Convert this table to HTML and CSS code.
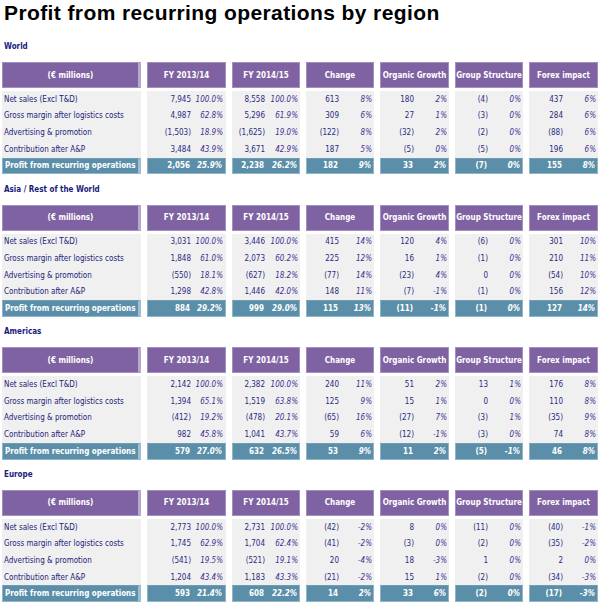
FILE: index.html
```html
<!DOCTYPE html>
<html lang="en">
<head>
<meta charset="utf-8">
<title>Profit from recurring operations by region</title>
<link rel="stylesheet" href="styles.css">
</head>
<body>
<h1 class="title">Profit from recurring operations by region</h1>

<section class="section">
  <div class="region">World</div>
  <div class="tbl">
    <div class="hd first">(€ millions)</div><div class="hd">FY 2013/14</div><div class="hd">FY 2014/15</div><div class="hd">Change</div><div class="hd">Organic Growth</div><div class="hd">Group Structure</div><div class="hd">Forex impact</div>
    <div class="lbl">Net sales (Excl T&amp;D)</div><div class="v"><span class="n">7,945</span><span class="p">100.0%</span></div><div class="v"><span class="n">8,558</span><span class="p">100.0%</span></div><div class="v"><span class="n">613</span><span class="p">8%</span></div><div class="v"><span class="n">180</span><span class="p">2%</span></div><div class="v"><span class="n">(4)</span><span class="p">0%</span></div><div class="v"><span class="n">437</span><span class="p">6%</span></div>
    <div class="lbl">Gross margin after logistics costs</div><div class="v"><span class="n">4,987</span><span class="p">62.8%</span></div><div class="v"><span class="n">5,296</span><span class="p">61.9%</span></div><div class="v"><span class="n">309</span><span class="p">6%</span></div><div class="v"><span class="n">27</span><span class="p">1%</span></div><div class="v"><span class="n">(3)</span><span class="p">0%</span></div><div class="v"><span class="n">284</span><span class="p">6%</span></div>
    <div class="lbl">Advertising &amp; promotion</div><div class="v"><span class="n">(1,503)</span><span class="p">18.9%</span></div><div class="v"><span class="n">(1,625)</span><span class="p">19.0%</span></div><div class="v"><span class="n">(122)</span><span class="p">8%</span></div><div class="v"><span class="n">(32)</span><span class="p">2%</span></div><div class="v"><span class="n">(2)</span><span class="p">0%</span></div><div class="v"><span class="n">(88)</span><span class="p">6%</span></div>
    <div class="lbl">Contribution after A&amp;P</div><div class="v"><span class="n">3,484</span><span class="p">43.9%</span></div><div class="v"><span class="n">3,671</span><span class="p">42.9%</span></div><div class="v"><span class="n">187</span><span class="p">5%</span></div><div class="v"><span class="n">(5)</span><span class="p">0%</span></div><div class="v"><span class="n">(5)</span><span class="p">0%</span></div><div class="v"><span class="n">196</span><span class="p">6%</span></div>
    <div class="lbl tot first">Profit from recurring operations</div><div class="v tot"><span class="n">2,056</span><span class="p">25.9%</span></div><div class="v tot"><span class="n">2,238</span><span class="p">26.2%</span></div><div class="v tot"><span class="n">182</span><span class="p">9%</span></div><div class="v tot"><span class="n">33</span><span class="p">2%</span></div><div class="v tot"><span class="n">(7)</span><span class="p">0%</span></div><div class="v tot"><span class="n">155</span><span class="p">8%</span></div>
  </div>
</section>

<section class="section">
  <div class="region">Asia / Rest of the World</div>
  <div class="tbl">
    <div class="hd first">(€ millions)</div><div class="hd">FY 2013/14</div><div class="hd">FY 2014/15</div><div class="hd">Change</div><div class="hd">Organic Growth</div><div class="hd">Group Structure</div><div class="hd">Forex impact</div>
    <div class="lbl">Net sales (Excl T&amp;D)</div><div class="v"><span class="n">3,031</span><span class="p">100.0%</span></div><div class="v"><span class="n">3,446</span><span class="p">100.0%</span></div><div class="v"><span class="n">415</span><span class="p">14%</span></div><div class="v"><span class="n">120</span><span class="p">4%</span></div><div class="v"><span class="n">(6)</span><span class="p">0%</span></div><div class="v"><span class="n">301</span><span class="p">10%</span></div>
    <div class="lbl">Gross margin after logistics costs</div><div class="v"><span class="n">1,848</span><span class="p">61.0%</span></div><div class="v"><span class="n">2,073</span><span class="p">60.2%</span></div><div class="v"><span class="n">225</span><span class="p">12%</span></div><div class="v"><span class="n">16</span><span class="p">1%</span></div><div class="v"><span class="n">(1)</span><span class="p">0%</span></div><div class="v"><span class="n">210</span><span class="p">11%</span></div>
    <div class="lbl">Advertising &amp; promotion</div><div class="v"><span class="n">(550)</span><span class="p">18.1%</span></div><div class="v"><span class="n">(627)</span><span class="p">18.2%</span></div><div class="v"><span class="n">(77)</span><span class="p">14%</span></div><div class="v"><span class="n">(23)</span><span class="p">4%</span></div><div class="v"><span class="n">0</span><span class="p">0%</span></div><div class="v"><span class="n">(54)</span><span class="p">10%</span></div>
    <div class="lbl">Contribution after A&amp;P</div><div class="v"><span class="n">1,298</span><span class="p">42.8%</span></div><div class="v"><span class="n">1,446</span><span class="p">42.0%</span></div><div class="v"><span class="n">148</span><span class="p">11%</span></div><div class="v"><span class="n">(7)</span><span class="p">-1%</span></div><div class="v"><span class="n">(1)</span><span class="p">0%</span></div><div class="v"><span class="n">156</span><span class="p">12%</span></div>
    <div class="lbl tot first">Profit from recurring operations</div><div class="v tot"><span class="n">884</span><span class="p">29.2%</span></div><div class="v tot"><span class="n">999</span><span class="p">29.0%</span></div><div class="v tot"><span class="n">115</span><span class="p">13%</span></div><div class="v tot"><span class="n">(11)</span><span class="p">-1%</span></div><div class="v tot"><span class="n">(1)</span><span class="p">0%</span></div><div class="v tot"><span class="n">127</span><span class="p">14%</span></div>
  </div>
</section>

<section class="section">
  <div class="region">Americas</div>
  <div class="tbl">
    <div class="hd first">(€ millions)</div><div class="hd">FY 2013/14</div><div class="hd">FY 2014/15</div><div class="hd">Change</div><div class="hd">Organic Growth</div><div class="hd">Group Structure</div><div class="hd">Forex impact</div>
    <div class="lbl">Net sales (Excl T&amp;D)</div><div class="v"><span class="n">2,142</span><span class="p">100.0%</span></div><div class="v"><span class="n">2,382</span><span class="p">100.0%</span></div><div class="v"><span class="n">240</span><span class="p">11%</span></div><div class="v"><span class="n">51</span><span class="p">2%</span></div><div class="v"><span class="n">13</span><span class="p">1%</span></div><div class="v"><span class="n">176</span><span class="p">8%</span></div>
    <div class="lbl">Gross margin after logistics costs</div><div class="v"><span class="n">1,394</span><span class="p">65.1%</span></div><div class="v"><span class="n">1,519</span><span class="p">63.8%</span></div><div class="v"><span class="n">125</span><span class="p">9%</span></div><div class="v"><span class="n">15</span><span class="p">1%</span></div><div class="v"><span class="n">0</span><span class="p">0%</span></div><div class="v"><span class="n">110</span><span class="p">8%</span></div>
    <div class="lbl">Advertising &amp; promotion</div><div class="v"><span class="n">(412)</span><span class="p">19.2%</span></div><div class="v"><span class="n">(478)</span><span class="p">20.1%</span></div><div class="v"><span class="n">(65)</span><span class="p">16%</span></div><div class="v"><span class="n">(27)</span><span class="p">7%</span></div><div class="v"><span class="n">(3)</span><span class="p">1%</span></div><div class="v"><span class="n">(35)</span><span class="p">9%</span></div>
    <div class="lbl">Contribution after A&amp;P</div><div class="v"><span class="n">982</span><span class="p">45.8%</span></div><div class="v"><span class="n">1,041</span><span class="p">43.7%</span></div><div class="v"><span class="n">59</span><span class="p">6%</span></div><div class="v"><span class="n">(12)</span><span class="p">-1%</span></div><div class="v"><span class="n">(3)</span><span class="p">0%</span></div><div class="v"><span class="n">74</span><span class="p">8%</span></div>
    <div class="lbl tot first">Profit from recurring operations</div><div class="v tot"><span class="n">579</span><span class="p">27.0%</span></div><div class="v tot"><span class="n">632</span><span class="p">26.5%</span></div><div class="v tot"><span class="n">53</span><span class="p">9%</span></div><div class="v tot"><span class="n">11</span><span class="p">2%</span></div><div class="v tot"><span class="n">(5)</span><span class="p">-1%</span></div><div class="v tot"><span class="n">46</span><span class="p">8%</span></div>
  </div>
</section>

<section class="section">
  <div class="region">Europe</div>
  <div class="tbl">
    <div class="hd first">(€ millions)</div><div class="hd">FY 2013/14</div><div class="hd">FY 2014/15</div><div class="hd">Change</div><div class="hd">Organic Growth</div><div class="hd">Group Structure</div><div class="hd">Forex impact</div>
    <div class="lbl">Net sales (Excl T&amp;D)</div><div class="v"><span class="n">2,773</span><span class="p">100.0%</span></div><div class="v"><span class="n">2,731</span><span class="p">100.0%</span></div><div class="v"><span class="n">(42)</span><span class="p">-2%</span></div><div class="v"><span class="n">8</span><span class="p">0%</span></div><div class="v"><span class="n">(11)</span><span class="p">0%</span></div><div class="v"><span class="n">(40)</span><span class="p">-1%</span></div>
    <div class="lbl">Gross margin after logistics costs</div><div class="v"><span class="n">1,745</span><span class="p">62.9%</span></div><div class="v"><span class="n">1,704</span><span class="p">62.4%</span></div><div class="v"><span class="n">(41)</span><span class="p">-2%</span></div><div class="v"><span class="n">(3)</span><span class="p">0%</span></div><div class="v"><span class="n">(2)</span><span class="p">0%</span></div><div class="v"><span class="n">(35)</span><span class="p">-2%</span></div>
    <div class="lbl">Advertising &amp; promotion</div><div class="v"><span class="n">(541)</span><span class="p">19.5%</span></div><div class="v"><span class="n">(521)</span><span class="p">19.1%</span></div><div class="v"><span class="n">20</span><span class="p">-4%</span></div><div class="v"><span class="n">18</span><span class="p">-3%</span></div><div class="v"><span class="n">1</span><span class="p">0%</span></div><div class="v"><span class="n">2</span><span class="p">0%</span></div>
    <div class="lbl">Contribution after A&amp;P</div><div class="v"><span class="n">1,204</span><span class="p">43.4%</span></div><div class="v"><span class="n">1,183</span><span class="p">43.3%</span></div><div class="v"><span class="n">(21)</span><span class="p">-2%</span></div><div class="v"><span class="n">15</span><span class="p">1%</span></div><div class="v"><span class="n">(2)</span><span class="p">0%</span></div><div class="v"><span class="n">(34)</span><span class="p">-3%</span></div>
    <div class="lbl tot first">Profit from recurring operations</div><div class="v tot"><span class="n">593</span><span class="p">21.4%</span></div><div class="v tot"><span class="n">608</span><span class="p">22.2%</span></div><div class="v tot"><span class="n">14</span><span class="p">2%</span></div><div class="v tot"><span class="n">33</span><span class="p">6%</span></div><div class="v tot"><span class="n">(2)</span><span class="p">0%</span></div><div class="v tot"><span class="n">(17)</span><span class="p">-3%</span></div>
  </div>
</section>
</body>
</html>
```
FILE: styles.css
```css
html, body {
  margin: 0;
  padding: 0;
  background: #ffffff;
}

body {
  font-family: "DejaVu Sans Condensed", "DejaVu Sans", sans-serif;
  font-size: 8px;
  color: #24237a;
}

.title {
  margin: 0;
  height: 40px;
  box-sizing: border-box;
  padding: 1px 0 0 4px;
  font-family: "Liberation Sans", Arial, sans-serif;
  font-size: 21px;
  line-height: 24px;
  letter-spacing: 0.4px;
  font-weight: bold;
  color: #000000;
}

.section {
  margin-bottom: 8.33px;
}

.region {
  height: 22px;
  line-height: 14px;
  padding-left: 4px;
  font-weight: bold;
  font-size: 8px;
  color: #1a1a7e;
}

.tbl {
  display: grid;
  grid-template-columns: 139px 79px 68px 68px 69px 68px 69px;
  column-gap: 6px;
  margin-left: 2px;
  width: 596px;
}

.hd {
  height: 26px;
  margin-bottom: 3px;
  box-sizing: border-box;
  background: #7f62a1;
  border: 1px solid #a38fc0;
  color: #ffffff;
  font-weight: bold;
  display: flex;
  align-items: center;
  justify-content: center;
  white-space: nowrap;
}

.hd.first {
  border-right: 3px solid #b7a8d0;
}

.lbl,
.v {
  height: 16.67px;
  box-sizing: border-box;
  background: #f0f0f0;
  display: flex;
  align-items: center;
  white-space: nowrap;
}

.lbl {
  padding-left: 2px;
  color: #22227a;
}

.v .n {
  flex: 1;
  text-align: right;
  padding-right: 3px;
  color: #2b2a82;
}

.v .p {
  width: 32px;
  box-sizing: border-box;
  text-align: right;
  padding-right: 2px;
  font-style: italic;
  color: #3e2f92;
}

.tbl > :nth-child(7n + 2) .p {
  width: 32px;
  padding-right: 3px;
}

.tbl > :nth-child(7n + 2) .n {
  padding-right: 3px;
}

.tot {
  background: #5b8fa9;
  border: 1px solid #8fb6c9;
  border-top-color: #6f9db4;
  font-weight: bold;
}

.tot.first {
  border-right: 3px solid #9cc0d1;
  color: #ffffff;
}

.tot .n,
.tot .p {
  color: #ffffff;
}
```
